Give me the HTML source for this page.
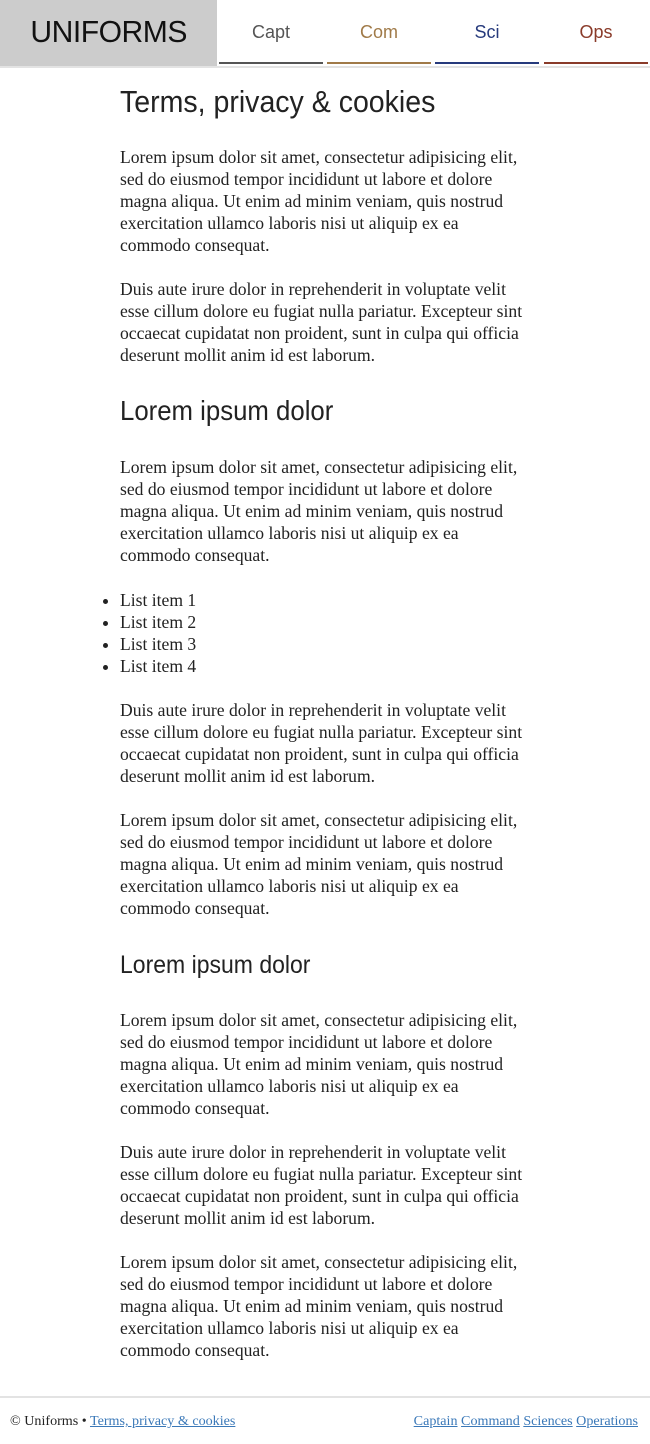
<!DOCTYPE html>
<html><head><meta charset="utf-8"><style>
*{margin:0;padding:0;box-sizing:border-box}
body{width:650px;height:1444px;background:#fff;position:relative;overflow:hidden;font-family:"Liberation Serif",serif;color:#222}
.logo{position:absolute;left:0;top:0;width:217px;height:66px;background:#ccc;font-family:"Liberation Sans",sans-serif;font-size:31px;line-height:64px;text-align:center;color:#111;letter-spacing:-0.5px}
.logo span{display:inline-block;transform:scaleX(0.97)}
.nav{position:absolute;top:0;height:64px;font-family:"Liberation Sans",sans-serif;font-size:18px;line-height:64px;text-align:center;border-bottom:2px solid}
.hr{position:absolute;left:0;width:650px;height:2px;background:#e3e3e3}
.b{position:absolute;left:120px;font-size:17.6px;line-height:22px;white-space:nowrap}
h1,h2{position:absolute;left:120px;font-family:"Liberation Sans",sans-serif;font-weight:normal;white-space:nowrap;color:#222;transform-origin:left center;transform:scaleX(0.92)}
h1{font-size:31px;line-height:36px}
h2{font-size:28px;line-height:32px}
ul{position:absolute;left:120px;font-size:17.6px;line-height:22px}
a{color:#3a78b8}
.f{position:absolute;top:1411px;font-size:14.1px;line-height:20px;white-space:nowrap}
</style></head><body>
<div class="logo"><span>UNIFORMS</span></div>
<div class="nav" style="left:219px;width:104px;color:#555;border-color:#555">Capt</div>
<div class="nav" style="left:327px;width:104px;color:#a07a48;border-color:#a07a48">Com</div>
<div class="nav" style="left:435px;width:104px;color:#263a7c;border-color:#263a7c">Sci</div>
<div class="nav" style="left:544px;width:104px;color:#8a3b2a;border-color:#8a3b2a">Ops</div>
<div class="hr" style="top:66px"></div>

<h1 style="top:84px">Terms, privacy &amp; cookies</h1>
<div class="b" style="top:146px">Lorem ipsum dolor sit amet, consectetur adipisicing elit,<br>sed do eiusmod tempor incididunt ut labore et dolore<br>magna aliqua. Ut enim ad minim veniam, quis nostrud<br>exercitation ullamco laboris nisi ut aliquip ex ea<br>commodo consequat.</div>
<div class="b" style="top:278px">Duis aute irure dolor in reprehenderit in voluptate velit<br>esse cillum dolore eu fugiat nulla pariatur. Excepteur sint<br>occaecat cupidatat non proident, sunt in culpa qui officia<br>deserunt mollit anim id est laborum.</div>
<h2 style="top:395px">Lorem ipsum dolor</h2>
<div class="b" style="top:456px">Lorem ipsum dolor sit amet, consectetur adipisicing elit,<br>sed do eiusmod tempor incididunt ut labore et dolore<br>magna aliqua. Ut enim ad minim veniam, quis nostrud<br>exercitation ullamco laboris nisi ut aliquip ex ea<br>commodo consequat.</div>
<ul style="top:589px"><li>List item 1</li><li>List item 2</li><li>List item 3</li><li>List item 4</li></ul>
<div class="b" style="top:699px">Duis aute irure dolor in reprehenderit in voluptate velit<br>esse cillum dolore eu fugiat nulla pariatur. Excepteur sint<br>occaecat cupidatat non proident, sunt in culpa qui officia<br>deserunt mollit anim id est laborum.</div>
<div class="b" style="top:809px">Lorem ipsum dolor sit amet, consectetur adipisicing elit,<br>sed do eiusmod tempor incididunt ut labore et dolore<br>magna aliqua. Ut enim ad minim veniam, quis nostrud<br>exercitation ullamco laboris nisi ut aliquip ex ea<br>commodo consequat.</div>
<h2 style="top:949px;font-size:25px">Lorem ipsum dolor</h2>
<div class="b" style="top:1009px">Lorem ipsum dolor sit amet, consectetur adipisicing elit,<br>sed do eiusmod tempor incididunt ut labore et dolore<br>magna aliqua. Ut enim ad minim veniam, quis nostrud<br>exercitation ullamco laboris nisi ut aliquip ex ea<br>commodo consequat.</div>
<div class="b" style="top:1141px">Duis aute irure dolor in reprehenderit in voluptate velit<br>esse cillum dolore eu fugiat nulla pariatur. Excepteur sint<br>occaecat cupidatat non proident, sunt in culpa qui officia<br>deserunt mollit anim id est laborum.</div>
<div class="b" style="top:1251px">Lorem ipsum dolor sit amet, consectetur adipisicing elit,<br>sed do eiusmod tempor incididunt ut labore et dolore<br>magna aliqua. Ut enim ad minim veniam, quis nostrud<br>exercitation ullamco laboris nisi ut aliquip ex ea<br>commodo consequat.</div>

<div class="hr" style="top:1396px"></div>
<div class="f" style="left:10px">© Uniforms • <a href="#">Terms, privacy &amp; cookies</a></div>
<div class="f" style="right:12px"><a href="#">Captain</a> <a href="#">Command</a> <a href="#">Sciences</a> <a href="#">Operations</a></div>
</body></html>
